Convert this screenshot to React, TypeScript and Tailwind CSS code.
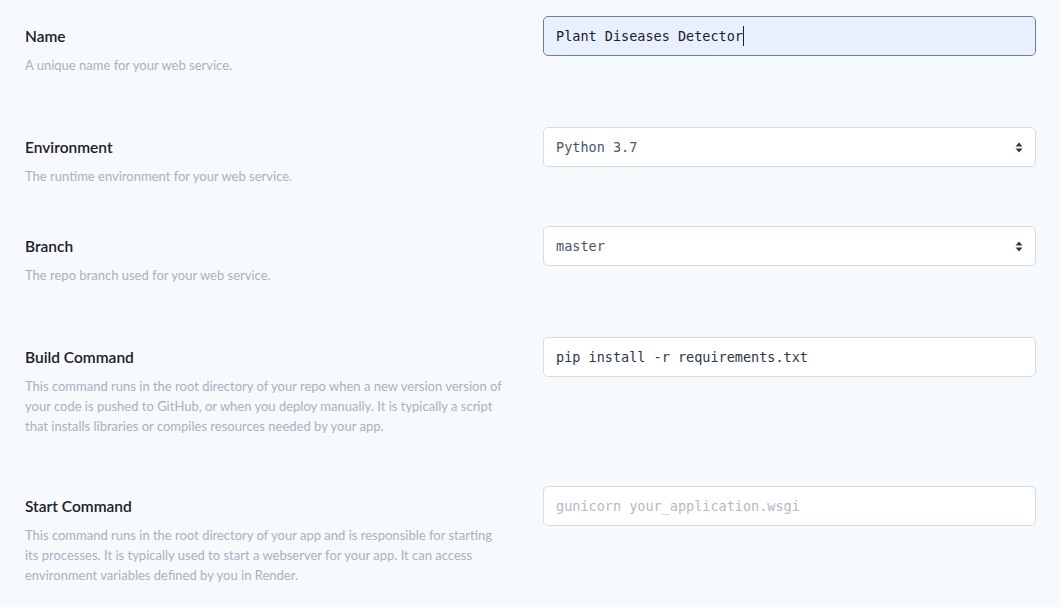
import { ReactNode } from 'react'

const sans = { fontFamily: 'Lato, "Open Sans", sans-serif' }
const mono = { fontFamily: '"DejaVu Sans Mono", "Liberation Mono", monospace' }

function Field({ label, desc, children, className }: { label: string; desc: ReactNode; children: ReactNode; className?: string }) {
  return (
    <div className={'flex ' + (className ?? '')}>
      <div className="w-[518px] pt-[10px] pr-[39px]" style={sans}>
        <div className="text-[15.5px] leading-5 font-semibold text-[#1a202c]">{label}</div>
        <div className="mt-[9px] text-[13px] leading-5 text-[#a9b0c2]">{desc}</div>
      </div>
      <div className="w-[493px]">{children}</div>
    </div>
  )
}

function SelectArrows() {
  return (
    <svg width="8" height="11" viewBox="0 0 8 11" className="text-[#2d3748]">
      <path d="M4 0.5 L7.5 4.5 H0.5 Z" fill="currentColor" />
      <path d="M4 10.5 L7.5 6.5 H0.5 Z" fill="currentColor" />
    </svg>
  )
}

function Select({ value }: { value: string }) {
  return (
    <div className="h-10 flex items-center justify-between px-3 bg-white border border-[#d5dce6] rounded-[5px]">
      <span className="text-[13.5px] text-[#4a5568]" style={mono}>{value}</span>
      <SelectArrows />
    </div>
  )
}

export default function App() {
  return (
    <div className="w-[1060px] h-[607px] bg-[#f7fafc] pl-[25px] pt-4 overflow-hidden">
      <Field label="Name" desc="A unique name for your web service.">
        <div className="h-10 flex items-center px-3 bg-[#e8f0fe] border border-[#6c7fa3] rounded-[5px]">
          <span className="text-[13.5px] text-[#1a202c]" style={mono}>Plant Diseases Detector</span>
          <span className="w-px h-5 bg-[#1a202c]" />
        </div>
      </Field>

      <Field className="mt-[52px]" label="Environment" desc="The runtime environment for your web service.">
        <Select value="Python 3.7" />
      </Field>

      <Field className="mt-10" label="Branch" desc="The repo branch used for your web service.">
        <Select value="master" />
      </Field>

      <Field
        className="mt-[52px]"
        label="Build Command"
        desc="This command runs in the root directory of your repo when a new version version of your code is pushed to GitHub, or when you deploy manually. It is typically a script that installs libraries or compiles resources needed by your app."
      >
        <div className="h-10 flex items-center px-3 bg-white border border-[#d5dce6] rounded-[5px]">
          <span className="text-[13.5px] text-[#2d3748]" style={mono}>pip install -r requirements.txt</span>
        </div>
      </Field>

      <Field
        className="mt-[50px]"
        label="Start Command"
        desc="This command runs in the root directory of your app and is responsible for starting its processes. It is typically used to start a webserver for your app. It can access environment variables defined by you in Render."
      >
        <div className="h-10 flex items-center px-3 bg-white border border-[#d5dce6] rounded-[5px]">
          <span className="text-[13.5px] text-[#b3bac7]" style={mono}>gunicorn your_application.wsgi</span>
        </div>
      </Field>
    </div>
  )
}
